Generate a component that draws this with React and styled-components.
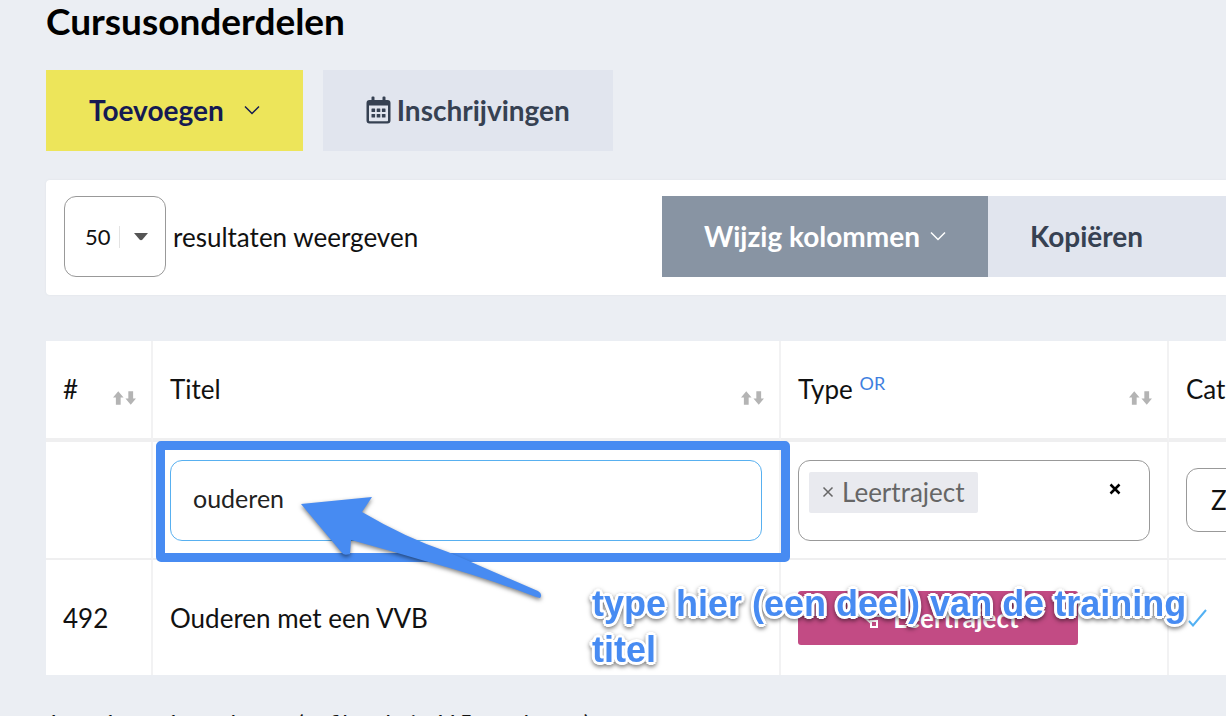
import React, { useState } from "react";
import styled, { createGlobalStyle } from "styled-components";

const ChevronIcon = () => (
  <svg width="16" height="10" viewBox="0 0 16 10" aria-hidden="true">
    <path d="M1 1.5 8 8.5 15 1.5" fill="none" stroke="currentColor" strokeWidth="1.5" />
  </svg>
);

const CalendarIcon = () => (
  <svg width="25" height="28" viewBox="0 0 25 28" aria-hidden="true">
    <path
      fill="currentColor"
      fillRule="evenodd"
      d="M5.5 1.5a1 1 0 0 1 1-1h1a1 1 0 0 1 1 1V4h8V1.500a1 1 0 0 1 1-1h1a1 1 0 0 1 1 1V4H21.500a3 3 0 0 1 3 3V24.500a3 3 0 0 1-3 3H3.500a3 3 0 0 1-3-3V7a3 3 0 0 1 3-3h2zM3 9.500V24.500q0 .7.7.7H21.300q.7 0 .7-.7V9.500z"
    />
    <g fill="currentColor">
      <rect x="5.500" y="12.500" width="3.600" height="3.600" rx=".5" />
      <rect x="10.700" y="12.500" width="3.600" height="3.600" rx=".5" />
      <rect x="15.900" y="12.500" width="3.600" height="3.600" rx=".5" />
      <rect x="5.500" y="18" width="3.600" height="3.600" rx=".5" />
      <rect x="10.700" y="18" width="3.600" height="3.600" rx=".5" />
      <rect x="15.900" y="18" width="3.600" height="3.600" rx=".5" />
    </g>
  </svg>
);

const SortIcon = () => (
  <svg width="23" height="14" viewBox="0 0 24 14" aria-hidden="true">
    <path
      fill="#b4b4b4"
      d="M5.500 0 11 6.500H8V14H3V6.500H0zM16 0h5V7.500H24L18.500 14 13 7.500h3z"
    />
  </svg>
);

const CrossIcon = ({ size, weight }) => (
  <svg width={size} height={size} viewBox="0 0 12 12" aria-hidden="true">
    <path d="M1.500 1.500 10.500 10.500M10.500 1.500 1.500 10.500" stroke="currentColor" strokeWidth={weight} />
  </svg>
);

const TrajectIcon = () => (
  <svg width="24" height="22" viewBox="0 0 24 22" aria-hidden="true">
    <g fill="none" stroke="currentColor" strokeWidth="2">
      <rect x="1" y="3" width="6" height="6" />
      <rect x="17" y="3" width="6" height="6" />
      <rect x="14" y="14" width="6" height="6" />
      <path d="M7 6h10M6 9l8 7" />
    </g>
  </svg>
);

const CheckIcon = () => (
  <svg width="22" height="18" viewBox="0 0 22 18" aria-hidden="true">
    <path d="M3 12 7 16.500 20 1" fill="none" stroke="#53b1f3" strokeWidth="2" />
  </svg>
);

const HeaderCell = ({ label, badge, sortable = true }) => (
  <Th scope="col">
    <HeaderContent>
      <span>
        {label} {badge && <Operator href="#operator">{badge}</Operator>}
      </span>
      {sortable && (
        <PlainButton type="button" aria-label={`Sorteer op ${label}`}>
          <SortIcon />
        </PlainButton>
      )}
    </HeaderContent>
  </Th>
);

const App = () => {
  const [amount, setAmount] = useState("50");
  const [title, setTitle] = useState("ouderen");

  return (
    <Page>
      <GlobalStyle />
      <Heading>Cursusonderdelen</Heading>
      <Actions>
        <Button type="button" $variant="primary" $gap={20}>
          Toevoegen <ChevronIcon />
        </Button>
        <Button type="button" $gap={6}>
          <CalendarIcon /> Inschrijvingen
        </Button>
      </Actions>

      <Toolbar>
        <AmountLabel>
          <SelectBox>
            <AmountSelect value={amount} onChange={(event) => setAmount(event.target.value)}>
              <option>10</option>
              <option>50</option>
              <option>100</option>
            </AmountSelect>
            <SelectArrow>
              <svg width="14" height="8" viewBox="0 0 14 8" aria-hidden="true">
                <path d="M0 0h14L8.500 6.500Q7 8 5.500 6.500z" fill="#555" />
              </svg>
            </SelectArrow>
          </SelectBox>
          resultaten weergeven
        </AmountLabel>
        <ButtonGroup>
          <Button type="button" $variant="dark" $gap={10}>
            Wijzig kolommen <ChevronIcon />
          </Button>
          <CopyButton type="button">Kopiëren</CopyButton>
        </ButtonGroup>
      </Toolbar>

      <Table>
        <colgroup>
          <Col $width={107} />
          <col />
          <Col $width={388} />
          <Col $width={57} />
        </colgroup>
        <thead>
          <tr>
            <HeaderCell label="#" />
            <HeaderCell label="Titel" />
            <HeaderCell label="Type" badge="OR" />
            <HeaderCell label="Cat" sortable={false} />
          </tr>
        </thead>
        <tbody>
          <tr>
            <FilterCell />
            <FilterCell>
              <TitleInput
                type="text"
                aria-label="Titel"
                value={title}
                onChange={(event) => setTitle(event.target.value)}
              />
              <Highlight />
              <Arrow width="256" height="116" viewBox="0 0 256 116" aria-hidden="true">
                <path
                  fill="#478bf2"
                  d="M7 13 78 6 68 21Q112 47 154 61L244 100Q249 103 246 107L242 106Q190 86 131 70Q94 59 57 49L56 63Q50 65 48 62z"
                />
              </Arrow>
            </FilterCell>
            <FilterCell>
              <TagField>
                <Tag type="button">
                  <CrossIcon size={12} weight={1.5} /> Leertraject
                </Tag>
                <PlainButton type="button" aria-label="Wissen">
                  <CrossIcon size={12} weight={2.5} />
                </PlainButton>
              </TagField>
            </FilterCell>
            <FilterCell>
              <CategorySelect aria-label="Categorie">
                <option>Z</option>
              </CategorySelect>
            </FilterCell>
          </tr>
          <tr>
            <Td>492</Td>
            <Td>
              Ouderen met een VVB
              <Note>
                type hier (een deel) van de training
                <br />
                titel
              </Note>
            </Td>
            <Td>
              <TypeBadge>
                <TrajectIcon /> Leertraject
              </TypeBadge>
            </Td>
            <Td>
              <CheckIcon />
            </Td>
          </tr>
        </tbody>
      </Table>
      <Summary>1 tot 1 van 1 resultaten (gefilterd uit 415 resultaten)</Summary>
    </Page>
  );
};

export default App;

const GlobalStyle = createGlobalStyle`
  * {
    box-sizing: border-box;
  }

  body {
    margin: 0;
    background-color: #ebeef3;
  }

  svg {
    display: block;
    flex-shrink: 0;
  }

  button, input, select {
    font-family: inherit;
  }
`;

const Page = styled.main`
  height: 100vh;
  overflow: hidden;
  padding: 1px 0 0 46px;
  font-family: Lato, sans-serif;
  font-size: 26px;
  line-height: 32px;
  color: #111;
`;

const Heading = styled.h1`
  margin: 0 0 29px;
  font-size: 37px;
  line-height: 40px;
  font-weight: 700;
  color: #000;
`;

const Actions = styled.div`
  display: flex;
  gap: 20px;
  margin-bottom: 29px;
`;

const variants = {
  primary: "background-color: #ede55a; color: #151a52;",
  dark: "background-color: #8894a3; color: #fff;",
  light: "background-color: #e1e5ee; color: #364152;",
};

const Button = styled.button`
  display: flex;
  align-items: center;
  gap: ${(props) => props.$gap}px;
  height: 81px;
  padding: 0 43px 2px;
  border: 0;
  font-size: 28px;
  font-weight: 700;
  white-space: nowrap;
  cursor: pointer;
  ${(props) => variants[props.$variant || "light"]}
`;

const CopyButton = styled(Button)`
  width: 238px;
`;

const PlainButton = styled.button`
  padding: 0;
  border: 0;
  background: none;
  color: #000;
  cursor: pointer;
`;

const Toolbar = styled.section`
  display: flex;
  justify-content: space-between;
  margin-bottom: 46px;
  padding: 16px 0 18px 18px;
  background-color: #fff;
  border-radius: 4px 0 0 4px;
  box-shadow: 0 0 2px #dcdfe4;
`;

const AmountLabel = styled.label`
  display: flex;
  align-items: center;
  gap: 7px;
`;

const SelectBox = styled.span`
  position: relative;
`;

const AmountSelect = styled.select`
  display: block;
  appearance: none;
  width: 102px;
  height: 81px;
  padding: 0 20px;
  border: 1px solid #999;
  border-radius: 12px;
  background-color: #fff;
  color: #111;
  font-size: 22px;
`;

const SelectArrow = styled.span`
  position: absolute;
  top: 30px;
  right: 18px;
  display: flex;
  align-items: center;
  height: 22px;
  padding-left: 14px;
  border-left: 1px solid #e3e3e3;
  pointer-events: none;
`;

const ButtonGroup = styled.div`
  display: flex;

  ${Button} {
    padding: 0 42px 2px;
  }
`;

const Table = styled.table`
  width: 100%;
  table-layout: fixed;
  border-spacing: 0;
  background-color: #fff;
`;

const Col = styled.col`
  width: ${(props) => props.$width}px;
`;

const Th = styled.th`
  height: 101px;
  padding: 0 15px 2px 17px;
  border-right: 2px solid #f2f2f3;
  border-bottom: 4px solid #efeff0;
  font-weight: 400;
  text-align: left;

  &:last-child {
    padding-right: 0;
    border-right: 0;
  }
`;

const HeaderContent = styled.div`
  display: flex;
  justify-content: space-between;
  align-items: flex-end;
`;

const Operator = styled.a`
  color: #3f7fe0;
  font-size: 18px;
  line-height: 18px;
  vertical-align: 9px;
  text-decoration: none;
`;

const Td = styled.td`
  position: relative;
  height: 115px;
  padding: 0 17px;
  border-right: 2px solid #f2f2f3;

  &:last-child {
    padding-right: 0;
    border-right: 0;
  }
`;

const FilterCell = styled(Td)`
  height: 118px;
  border-bottom: 2px solid #efeff0;
`;

const TitleInput = styled.input`
  display: block;
  width: 100%;
  height: 81px;
  padding: 0 22px 4px;
  border: 1px solid #58b0f0;
  border-radius: 12px;
  background-color: #fff;
  color: #222;
  font-size: 25px;
  outline: none;
`;

const Highlight = styled.div`
  position: absolute;
  inset: -1px -11px -4px 3px;
  z-index: 1;
  border: 9px solid #478bf2;
  border-radius: 5px;
  pointer-events: none;
`;

const Arrow = styled.svg`
  position: absolute;
  top: 49px;
  left: 141px;
  z-index: 2;
  filter: drop-shadow(0 2px 2px rgba(0, 0, 0, 0.5));
  pointer-events: none;
`;

const TagField = styled.div`
  display: flex;
  justify-content: space-between;
  align-items: flex-start;
  height: 81px;
  padding: 11px 28px 0 10px;
  border: 1px solid #999;
  border-radius: 12px;

  ${PlainButton} {
    padding-top: 11px;
  }
`;

const Tag = styled.button`
  display: flex;
  align-items: center;
  gap: 8px;
  height: 41px;
  padding: 0 13px;
  border: 0;
  border-radius: 2px;
  background-color: #e9eaef;
  color: #666;
  font-size: 26px;
`;

const CategorySelect = styled.select`
  display: block;
  appearance: none;
  width: 120px;
  height: 64px;
  padding: 0 24px;
  border: 1px solid #999;
  border-radius: 12px;
  background-color: #fff;
  color: #111;
  font-size: 26px;
`;

const TypeBadge = styled.span`
  display: flex;
  justify-content: center;
  align-items: center;
  gap: 12px;
  width: 280px;
  height: 54px;
  border-radius: 3px;
  background-color: #c24b84;
  color: #fff;
  font-size: 26px;
  font-weight: 700;
`;

const Note = styled.strong`
  position: absolute;
  top: 21px;
  left: 439px;
  z-index: 3;
  color: #478bf2;
  font-family: "Liberation Sans", Arial, sans-serif;
  font-size: 36px;
  line-height: 46px;
  white-space: nowrap;
  text-shadow: 2px 0 #fff, -2px 0 #fff, 0 2px #fff, 0 -2px #fff, 2px 2px #fff,
    -2px 2px #fff, 2px -2px #fff, -2px -2px #fff, 3px 0 #fff, -3px 0 #fff,
    0 3px #fff, 0 -3px #fff;
  filter: drop-shadow(0 2px 2px rgba(0, 0, 0, 0.5));
`;

const Summary = styled.p`
  margin: 32px 0 0;
  font-size: 24px;
`;
